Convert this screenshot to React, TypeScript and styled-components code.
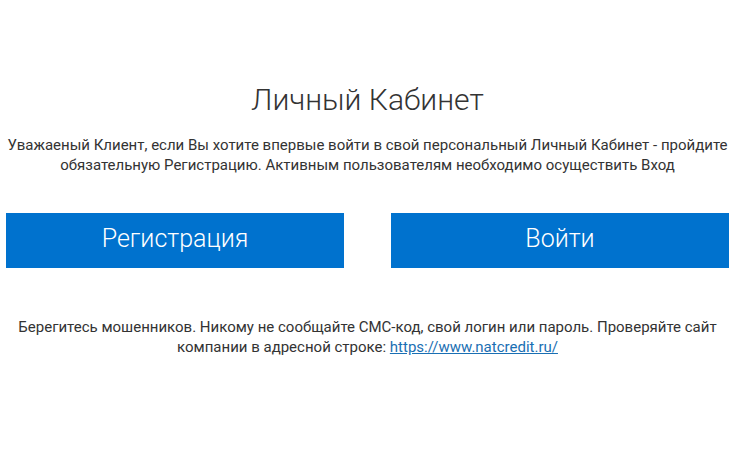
import React from "react";
import styled, { createGlobalStyle } from "styled-components";

const GlobalStyle = createGlobalStyle`
  html, body {
    margin: 0;
    padding: 0;
    background: #ffffff;
  }
  body {
    font-family: Roboto, "Noto Sans", "Liberation Sans", sans-serif;
    color: #333333;
  }
`;

const Page = styled.div`
  width: 740px;
  box-sizing: border-box;
  padding: 82px 11px 0 6px;
  display: flex;
  flex-direction: column;
  align-items: stretch;
`;

const Title = styled.h1`
  margin: 0;
  font-size: 30px;
  font-weight: 300;
  line-height: 36px;
  text-align: center;
  color: #333333;
`;

const Lead = styled.p`
  margin: 17px 0 0;
  font-size: 15px;
  line-height: 20px;
  text-align: center;
  color: #333333;
`;

const Buttons = styled.div`
  display: grid;
  grid-template-columns: 338px 338px;
  column-gap: 47px;
  margin-top: 38px;
`;

const ActionButton = styled.button`
  height: 55px;
  border: none;
  border-radius: 0;
  background: #0072ce;
  color: #ffffff;
  font-family: Roboto, "Noto Sans", "Liberation Sans", sans-serif;
  font-size: 25px;
  font-weight: 300;
  cursor: pointer;
  padding: 0 0 4px;
`;

const Warning = styled.p`
  margin: 49px 0 0;
  font-size: 15px;
  line-height: 20px;
  text-align: center;
  color: #333333;
`;

const SiteLink = styled.a`
  color: #1a6fb3;
  text-decoration: underline;
`;

export default function App() {
  return (
    <>
      <GlobalStyle />
      <Page>
        <Title>Личный Кабинет</Title>
        <Lead>
          Уважаеный Клиент, если Вы хотите впервые войти в свой персональный Личный Кабинет - пройдите
          обязательную Регистрацию. Активным пользователям необходимо осуществить Вход
        </Lead>
        <Buttons>
          <ActionButton>Регистрация</ActionButton>
          <ActionButton>Войти</ActionButton>
        </Buttons>
        <Warning>
          Берегитесь мошенников. Никому не сообщайте СМС-код, свой логин или пароль. Проверяйте сайт
          компании в адресной строке: <SiteLink href="#">https://www.natcredit.ru/</SiteLink>
        </Warning>
      </Page>
    </>
  );
}
